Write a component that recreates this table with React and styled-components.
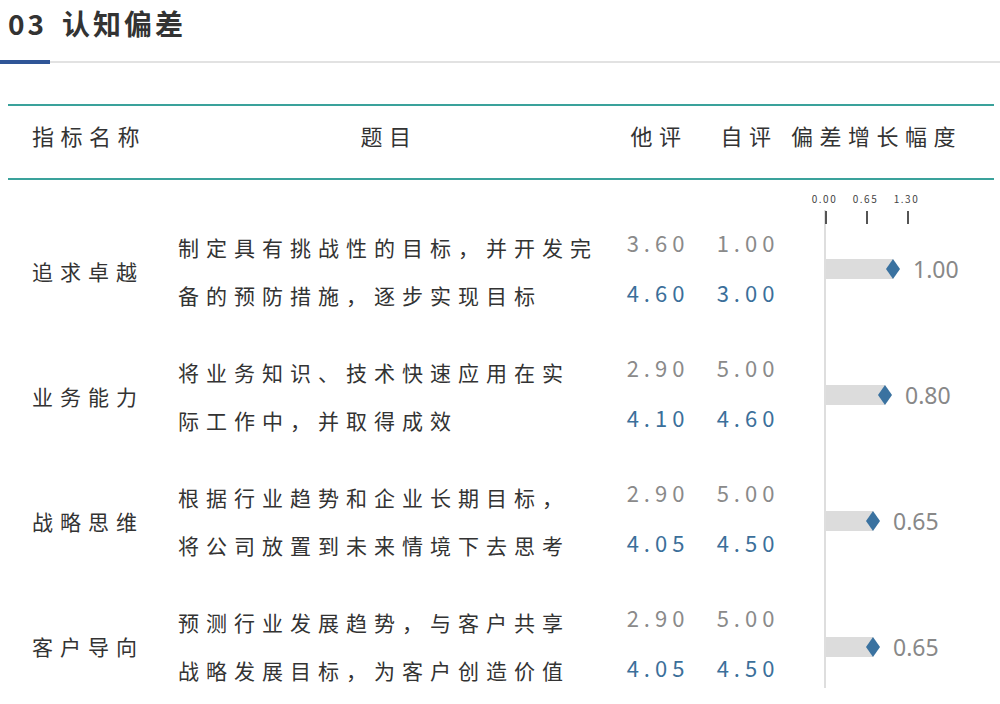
import React from 'react';
import styled, { createGlobalStyle } from 'styled-components';

const GlobalStyle = createGlobalStyle`
  html, body {
    margin: 0;
    padding: 0;
    background: #fff;
  }
  body {
    font-family: "Noto Sans CJK SC", "Noto Sans", sans-serif;
    color: #333;
  }
`;

const Page = styled.div`
  width: 1000px;
  height: 704px;
  overflow: hidden;
  background: #fff;
`;

const Title = styled.h2`
  display: flex;
  gap: 15px;
  margin: 0;
  padding-left: 8px;
  height: 46px;
  line-height: 46px;
  font-size: 28px;
  font-weight: 700;
  letter-spacing: 3px;
  color: #333;
`;

const TitleRule = styled.div`
  display: flex;
  align-items: center;
  margin-top: 14px;
  height: 4px;
`;

const RuleAccent = styled.div`
  width: 50px;
  height: 4px;
  background: #2f5597;
`;

const RuleLine = styled.div`
  flex: 1;
  height: 2px;
  background: #e2e2e2;
`;

const Table = styled.div`
  margin: 40px 6px 0 8px;
  border-top: 2px solid #3aa29b;
`;

const cols = '170px 436px 90px 90px';

const HeadRow = styled.div`
  display: grid;
  grid-template-columns: ${cols} 1fr;
  height: 72px;
  border-bottom: 2px solid #3aa29b;
`;

const HeadCell = styled.div`
  line-height: 58px;
  font-size: 22px;
  letter-spacing: 6.5px;
  color: #333;
  white-space: nowrap;
  text-align: ${p => p.align || 'center'};
  padding-left: ${p => p.pl || 0}px;
  padding-right: ${p => p.pr || 0}px;
  margin-left: ${p => p.ml || 0}px;
`;

const Body = styled.div`
  display: flex;
`;

const Rows = styled.div`
  padding-top: 28px;
`;

const Row = styled.div`
  display: grid;
  grid-template-columns: ${cols};
  height: 125px;
  align-items: center;
`;

const Name = styled.div`
  padding-left: 24px;
  font-size: 21px;
  letter-spacing: 7px;
  line-height: 48px;
  color: #333;
`;

const Question = styled.div`
  font-size: 21px;
  letter-spacing: 7px;
  line-height: 48px;
  color: #333;
  white-space: nowrap;
`;

const Scores = styled.div`
  display: flex;
  flex-direction: column;
  align-items: center;
  margin-top: -7px;
`;

const Score = styled.span`
  font-size: 22px;
  letter-spacing: 5px;
  line-height: 50px;
  padding-right: 2px;
  color: ${p => (p.blue ? '#3b6f9a' : '#8a8a8a')};
`;

const Chart = styled.div`
  width: 200px;
`;

const AxisLabels = styled.div`
  display: flex;
  height: 30px;
  padding-top: 13px;
  box-sizing: border-box;
  margin-left: 10px;
`;

const AxisLabel = styled.span`
  width: 41px;
  text-align: center;
  font-size: 10px;
  line-height: 12px;
  letter-spacing: 1.5px;
  color: #444;
`;

const Track = styled.div`
  position: relative;
  margin-left: 30px;
  height: 478px;
  border-left: 2px solid #dedede;
`;

const Tick = styled.span`
  position: absolute;
  top: 1px;
  width: 2px;
  height: 13px;
  background: #555;
`;

const BarRow = styled.div`
  display: flex;
  align-items: center;
  height: 126px;
  padding-bottom: 8px;
  box-sizing: border-box;
`;

const Bar = styled.div`
  position: relative;
  height: 20px;
  background: #dcdcdc;
`;

const Diamond = styled.svg`
  position: absolute;
  right: -7px;
  top: 50%;
  transform: translateY(-50%);
`;

const BiasValue = styled.span`
  margin-left: 20px;
  font-family: "Noto Sans", "Open Sans", sans-serif;
  font-size: 23px;
  line-height: 1;
  color: #888;
`;

const rows = [
  {
    name: '追求卓越',
    lines: ['制定具有挑战性的目标，并开发完', '备的预防措施，逐步实现目标'],
    other: ['3.60', '4.60'],
    self: ['1.00', '3.00'],
    bias: '1.00',
    bar: 67,
  },
  {
    name: '业务能力',
    lines: ['将业务知识、技术快速应用在实', '际工作中，并取得成效'],
    other: ['2.90', '4.10'],
    self: ['5.00', '4.60'],
    bias: '0.80',
    bar: 59,
  },
  {
    name: '战略思维',
    lines: ['根据行业趋势和企业长期目标，', '将公司放置到未来情境下去思考'],
    other: ['2.90', '4.05'],
    self: ['5.00', '4.50'],
    bias: '0.65',
    bar: 47,
  },
  {
    name: '客户导向',
    lines: ['预测行业发展趋势，与客户共享', '战略发展目标，为客户创造价值'],
    other: ['2.90', '4.05'],
    self: ['5.00', '4.50'],
    bias: '0.65',
    bar: 47,
  },
];

const ticks = ['0.00', '0.65', '1.30'];

const App = () => {
  return (
    <Page>
      <GlobalStyle />
      <Title>
        <span>03</span>
        <span>认知偏差</span>
      </Title>
      <TitleRule>
        <RuleAccent />
        <RuleLine />
      </TitleRule>

      <Table>
        <HeadRow>
          <HeadCell align="left" pl={24}>指标名称</HeadCell>
          <HeadCell pr={14}>题目</HeadCell>
          <HeadCell>他评</HeadCell>
          <HeadCell>自评</HeadCell>
          <HeadCell align="left" ml={-3}>偏差增长幅度</HeadCell>
        </HeadRow>

        <Body>
          <Rows>
            {rows.map(r => (
              <Row key={r.name}>
                <Name>{r.name}</Name>
                <Question>
                  {r.lines.map(l => (
                    <div key={l}>{l}</div>
                  ))}
                </Question>
                <Scores>
                  <Score>{r.other[0]}</Score>
                  <Score blue>{r.other[1]}</Score>
                </Scores>
                <Scores>
                  <Score>{r.self[0]}</Score>
                  <Score blue>{r.self[1]}</Score>
                </Scores>
              </Row>
            ))}
          </Rows>

          <Chart>
            <AxisLabels>
              {ticks.map(t => (
                <AxisLabel key={t}>{t}</AxisLabel>
              ))}
            </AxisLabels>
            <Track>
              {ticks.map((t, i) => (
                <Tick key={t} style={{ left: i * 41 - 1 }} />
              ))}
              {rows.map(r => (
                <BarRow key={r.name}>
                  <Bar style={{ width: r.bar }}>
                    <Diamond width="14" height="20" viewBox="0 0 14 20">
                      <polygon points="7,0 14,10 7,20 0,10" fill="#3a72a0" />
                    </Diamond>
                  </Bar>
                  <BiasValue>{r.bias}</BiasValue>
                </BarRow>
              ))}
            </Track>
          </Chart>
        </Body>
      </Table>
    </Page>
  );
};

export default App;
